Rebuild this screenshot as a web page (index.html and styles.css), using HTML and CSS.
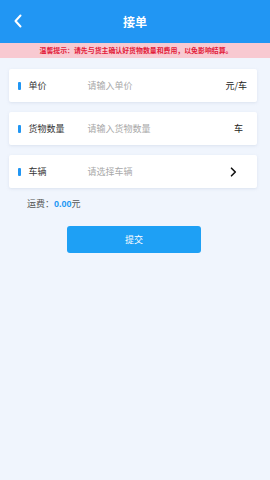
FILE: index.html
```html
<!DOCTYPE html>
<html lang="zh">
<head>
<meta charset="utf-8">
<title>接单</title>
<link rel="stylesheet" href="styles.css">
</head>
<body>
<div class="page">
  <header class="topbar">
    <span class="back"><svg width="10" height="14" viewBox="0 0 10 14"><path d="M7.5 1.5 L2.5 7 L7.5 12.5" fill="none" stroke="#fff" stroke-width="2" stroke-linecap="round" stroke-linejoin="round"/></svg></span>
    <h1 class="title">接单</h1>
  </header>
  <div class="notice">温馨提示：请先与货主确认好货物数量和费用，以免影响结算。</div>
  <main class="content">
    <div class="card">
      <span class="mark"></span>
      <span class="label">单价</span>
      <span class="placeholder">请输入单价</span>
      <span class="unit">元/车</span>
    </div>
    <div class="card">
      <span class="mark"></span>
      <span class="label">货物数量</span>
      <span class="placeholder">请输入货物数量</span>
      <span class="unit unit-che">车</span>
    </div>
    <div class="card">
      <span class="mark"></span>
      <span class="label">车辆</span>
      <span class="placeholder">请选择车辆</span>
      <span class="unit arrow"><svg width="7" height="10" viewBox="0 0 7 10"><path d="M1.5 1.2 L5.3 5 L1.5 8.8" fill="none" stroke="#111" stroke-width="1.6" stroke-linecap="round" stroke-linejoin="round"/></svg></span>
    </div>
    <div class="fee">运费：<b>0.00</b>元</div>
    <div class="btnrow"><button class="submit">提交</button></div>
  </main>
</div>
</body>
</html>
```
FILE: styles.css
```css
html, body {
  margin: 0;
  padding: 0;
  height: 100%;
}
body {
  font-family: "Noto Sans CJK SC", "Noto Sans", sans-serif;
  background: #f0f5fd;
}
.page {
  display: flex;
  flex-direction: column;
  min-height: 100%;
}
.topbar {
  height: 43px;
  background: #2196f3;
  display: flex;
  align-items: center;
  justify-content: center;
  position: relative;
}
.back {
  position: absolute;
  left: 13px;
  top: 14px;
  display: flex;
}
.title {
  margin: 0;
  color: #fff;
  font-size: 12px;
  font-weight: bold;
  line-height: 1;
}
.notice {
  height: 15px;
  background: #f8c9d1;
  color: #e2203a;
  font-size: 6.9px;
  font-weight: bold;
  line-height: 15px;
  text-align: center;
  padding-left: 2px;
}
.content {
  padding: 11px 13px 0 9px;
  display: flex;
  flex-direction: column;
}
.card {
  height: 33px;
  background: #fff;
  border-radius: 2px;
  box-shadow: 0 1px 3px rgba(160, 175, 200, 0.25);
  display: flex;
  align-items: center;
  margin-bottom: 10px;
  font-size: 9px;
}
.mark {
  width: 2.5px;
  height: 8px;
  background: #2196f3;
  margin-left: 9px;
  border-radius: 1px;
}
.label {
  margin-left: 8px;
  width: 59px;
  color: #333;
}
.placeholder {
  color: #a8a8a8;
  flex: 1;
}
.unit {
  color: #222;
  margin-right: 10px;
}
.unit-che {
  margin-right: 14px;
}
.arrow {
  display: flex;
  margin-right: 20px;
}
.fee {
  margin: 0 0 0 18px;
  font-size: 9px;
  color: #555;
  line-height: 12px;
}
.fee b {
  color: #2196f3;
  font-family: "Liberation Sans", Arial, sans-serif;
}
.btnrow {
  display: flex;
  margin-top: 16px;
  padding-left: 58px;
}
.submit {
  width: 134px;
  height: 27px;
  border: none;
  border-radius: 3px;
  background: #1ea0f5;
  color: #fff;
  font-family: "Noto Sans CJK SC", sans-serif;
  font-size: 9px;
  padding: 0;
}
```
